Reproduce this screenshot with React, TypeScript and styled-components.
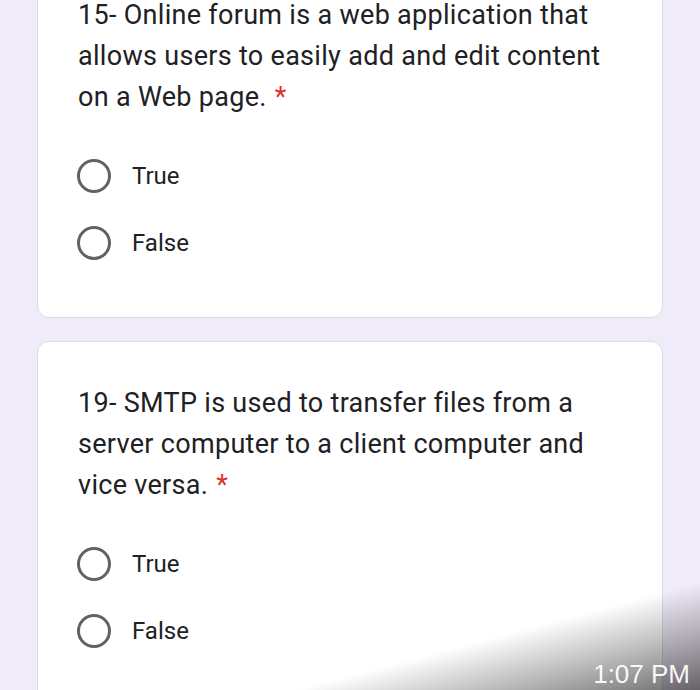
import React from "react";
import styled, { createGlobalStyle } from "styled-components";

const GlobalStyle = createGlobalStyle`
  html, body {
    margin: 0;
    padding: 0;
    background: #f0ebf8;
    overflow: hidden;
  }
  * { box-sizing: border-box; }
`;

const Screen = styled.div`
  position: relative;
  width: 700px;
  height: 690px;
  overflow: hidden;
  background: #f0ebf8;
  font-family: Roboto, "Noto Sans", Arial, sans-serif;
`;

const Column = styled.div`
  display: flex;
  flex-direction: column;
  gap: 23px;
  margin-top: -47px;
  padding: 0 37px;
`;

const Card = styled.section`
  background: #ffffff;
  border: 1px solid #dadce0;
  border-radius: 12px;
  padding: 41px 39px 41px 39px;
`;

const Question = styled.div`
  font-size: 27px;
  line-height: 41px;
  color: #202124;
  letter-spacing: 0.3px;
  padding-left: 1px;
`;

const Required = styled.span`
  color: #d93025;
  margin-left: 8px;
`;

const Options = styled.div`
  display: flex;
  flex-direction: column;
  margin-top: 24px;
`;

const Option = styled.label`
  display: flex;
  align-items: center;
  height: 67px;
`;

const Radio = styled.span`
  width: 34px;
  height: 34px;
  border-radius: 50%;
  border: 3px solid #5f6368;
  flex: none;
`;

const OptionText = styled.span`
  margin-left: 21px;
  font-size: 24px;
  color: #202124;
`;

const Shade = styled.div`
  position: absolute;
  right: 0;
  bottom: 0;
  width: 450px;
  height: 150px;
  background: linear-gradient(
    165deg,
    rgba(0, 0, 0, 0) 60%,
    rgba(0, 0, 0, 0.28) 80%,
    rgba(0, 0, 0, 0.58) 100%
  );
  pointer-events: none;
`;

const Time = styled.div`
  position: absolute;
  right: 10px;
  bottom: 1px;
  font-family: "Liberation Sans", Arial, sans-serif;
  font-size: 26px;
  line-height: 30px;
  color: rgba(255, 255, 255, 0.95);
`;

type Q = { lines: string[]; options: string[] };

const questions: Q[] = [
  {
    lines: [
      "15- Online forum is a web application that",
      "allows users to easily add and edit content",
      "on a Web page.",
    ],
    options: ["True", "False"],
  },
  {
    lines: [
      "19- SMTP is used to transfer files from a",
      "server computer to a client computer and",
      "vice versa.",
    ],
    options: ["True", "False"],
  },
];

export default function App() {
  return (
    <Screen>
      <GlobalStyle />
      <Column>
        {questions.map((q, i) => (
          <Card key={i}>
            <Question>
              {q.lines.map((l, j) => (
                <div key={j}>
                  {l}
                  {j === q.lines.length - 1 && <Required>*</Required>}
                </div>
              ))}
            </Question>
            <Options>
              {q.options.map((o) => (
                <Option key={o}>
                  <Radio />
                  <OptionText>{o}</OptionText>
                </Option>
              ))}
            </Options>
          </Card>
        ))}
      </Column>
      <Shade />
      <Time>1:07 PM</Time>
    </Screen>
  );
}
